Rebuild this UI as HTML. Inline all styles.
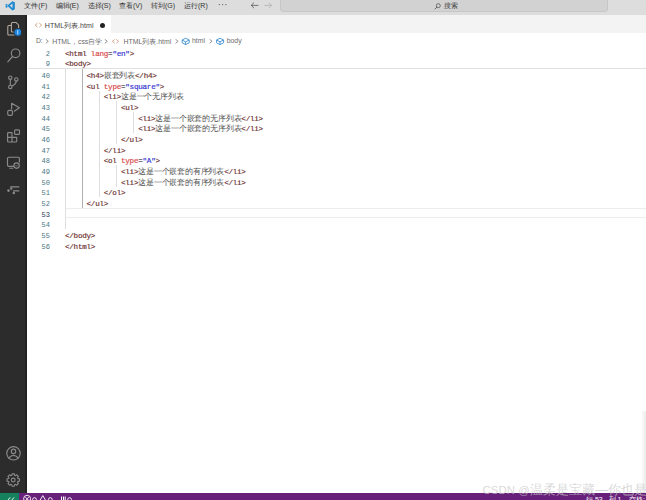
<!DOCTYPE html>
<html><head><meta charset="utf-8">
<style>
*{margin:0;padding:0;box-sizing:border-box}
html,body{width:646px;height:500px;overflow:hidden;background:#fff;font-family:"Liberation Sans",sans-serif}
.abs{position:absolute}
#title{left:0;top:0;width:646px;height:15px;background:#dddddd}
.menu{position:absolute;top:-0.3px;font-size:7px;line-height:11px;color:#333;white-space:nowrap}
#search{left:280px;top:-3px;width:328px;height:14.5px;background:#d2d2d2;border:1px solid #c6c6c6;border-radius:3px}
#act{left:0;top:15px;width:27px;height:478px;background:#2c2c2c}
#tabs{left:27px;top:15px;width:619px;height:18px;background:#f3f3f3}
#tab{left:27px;top:15px;width:83.5px;height:18px;background:#fff}
.tabtxt{font-size:7.1px;color:#444;white-space:nowrap}
#crumbs{left:0;top:33px;font-size:7.2px;color:#6c6c6c;white-space:nowrap}
.code{position:absolute;left:65px;padding-top:1.6px;-webkit-text-stroke:0.18px;font-family:"Liberation Mono",monospace;font-size:7.6px;letter-spacing:-0.252px;line-height:10.66px;height:10.66px;white-space:pre;color:#000}
.ln{position:absolute;padding-top:1.6px;left:20px;width:30px;text-align:right;font-family:"Liberation Mono",monospace;font-size:7.07px;line-height:10.66px;color:#4a7884}
.t{color:#6e3232}.a{color:#d84a4a}.v{color:#3434d0}
.z{font-size:7.81px;letter-spacing:-0.19px;color:#505050;-webkit-text-stroke:0}
.g{position:absolute;width:1.2px;background:#dedede}.g.act{background:#b0b0b0}.ln.cur{color:#2a3a5a}
#status{left:0;top:493px;width:646px;height:7px;background:#68217a}
</style></head><body>
<div id="title" class="abs">
  <svg class="abs" style="left:5px;top:1.4px" width="10.5" height="9.6" viewBox="0 0 24 24"><path d="M17.5 0.5 L23.5 3.3 V20.7 L17.5 23.5 L6.5 13.8 L2 17.2 L0.5 16.3 V7.7 L2 6.8 L6.5 10.2 Z M17.5 6.5 L11 12 L17.5 17.5 Z M3.5 9.5 V14.5 L6 12 Z" fill="#1f8ad2" fill-rule="evenodd"/></svg>
  <div class="menu" style="left:24.3px">文件(F)</div>
  <div class="menu" style="left:55.5px">编辑(E)</div>
  <div class="menu" style="left:87.5px">选择(S)</div>
  <div class="menu" style="left:119px">查看(V)</div>
  <div class="menu" style="left:151px">转到(G)</div>
  <div class="menu" style="left:184px">运行(R)</div>
  <svg class="abs" style="left:218px;top:0" width="10" height="10" viewBox="0 0 10 10" fill="#555"><circle cx="1.3" cy="4.6" r="0.6"/><circle cx="4.6" cy="4.6" r="0.6"/><circle cx="7.9" cy="4.6" r="0.6"/></svg>
  <svg class="abs" style="left:248px;top:0" width="28" height="12" viewBox="0 0 28 12" fill="none" stroke-width="0.9"><path d="M3.2 5.4 H10.4 M6 2.6 L3.2 5.4 L6 8.2" stroke="#555" stroke-width="0.8"/><path d="M16.4 5.4 H23.6 M20.8 2.6 L23.6 5.4 L20.8 8.2" stroke="#b0b0b0" stroke-width="0.8"/></svg>
  <div id="search" class="abs"></div>
  <svg class="abs" style="left:434px;top:2.5px" width="7" height="7" viewBox="0 0 7 7"><circle cx="4.3" cy="2.7" r="2" fill="none" stroke="#555" stroke-width="0.8"/><path d="M2.9 4.1 L0.8 6.2" stroke="#555" stroke-width="0.9"/></svg>
  <div class="menu" style="left:443.5px;color:#444">搜索</div>
</div>
<div id="act" class="abs"><div class="abs" style="left:25px;top:0;width:2px;height:478px;background:#232323"></div>
<svg class="abs" style="left:0;top:0" width="27" height="478" viewBox="0 15 27 478" fill="none" stroke="#8a8a8a" stroke-width="1.15" stroke-linecap="round" stroke-linejoin="round">
 <g stroke="#b5aba0" stroke-width="1.05">
  <path d="M11.4 31 V23.4 Q11.4 22.4 12.4 22.4 H16 L18.6 25 V29"/>
  <path d="M11 25.4 H8.8 Q7.8 25.4 7.8 26.4 V34 Q7.8 35 8.8 35 H14.2"/>
  <path d="M11.4 31 Q11.4 32 12.4 32 H13.5"/>
 </g>
 <circle cx="17.8" cy="32.3" r="3.9" fill="#1a85e0" stroke="#2c2c2c" stroke-width="0.8"/>
 <path d="M17.8 30.6 V34" stroke="#bfe4ff" stroke-width="1"/>
 <circle cx="15.6" cy="53.3" r="4.3"/>
 <path d="M12.5 56.5 L7.8 61.8"/>
 <circle cx="10.3" cy="77.7" r="1.7"/>
 <circle cx="10.3" cy="86.9" r="1.7"/>
 <circle cx="16.3" cy="79.4" r="1.7"/>
 <path d="M10.3 79.4 V85.2"/>
 <path d="M16.3 81.1 Q16.1 84 11.9 86"/>
 <path d="M11.6 109 V103.3 L19.4 107.8 L14.3 111.2"/>
 <rect x="7.7" y="110.4" width="4.8" height="5" rx="1.6"/>
 <path d="M8.4 132.6 H12 V142 H8.4 Q7.6 142 7.6 141.2 V133.4 Q7.6 132.6 8.4 132.6 Z M7.6 137.3 H16.7 V141.2 Q16.7 142 15.9 142 H12"/>
 <rect x="14.6" y="129.8" width="4.9" height="4.6" rx="1"/>
 <path d="M13.5 166.3 H8.7 Q7.5 166.3 7.5 165 V158.3 Q7.5 157.2 8.7 157.2 H18.3 Q19.4 157.2 19.4 158.3 V162"/>
 <circle cx="16.6" cy="165.6" r="2.7"/>
 <path d="M9.8 168.2 H12.8"/>
 <path d="M15.7 165.8 L16.4 166.4 L17.6 164.9" stroke-width="0.7"/>
 <path d="M10.6 186.9 H18.8 M13.6 190.9 H18.8" stroke-width="1.4"/>
 <circle cx="11.3" cy="188.6" r="0.6" fill="#8a8a8a"/>
 <circle cx="8.5" cy="190.6" r="0.7" fill="#8a8a8a"/>
 <circle cx="13.8" cy="192.9" r="0.7" fill="#8a8a8a"/>
 <circle cx="13.5" cy="453.3" r="6.7"/>
 <circle cx="13.5" cy="451.4" r="2.2"/>
 <path d="M8.8 458 Q13.5 452.8 18.2 458"/>
 <g transform="translate(13.2 480)">
  <path d="M-1.45 -4.68 L-1.10 -6.20 L1.10 -6.20 L1.45 -4.68 L2.29 -4.33 L3.61 -5.17 L5.17 -3.61 L4.33 -2.29 L4.68 -1.45 L6.20 -1.10 L6.20 1.10 L4.68 1.45 L4.33 2.29 L5.17 3.61 L3.61 5.17 L2.29 4.33 L1.45 4.68 L1.10 6.20 L-1.10 6.20 L-1.45 4.68 L-2.29 4.33 L-3.61 5.17 L-5.17 3.61 L-4.33 2.29 L-4.68 1.45 L-6.20 1.10 L-6.20 -1.10 L-4.68 -1.45 L-4.33 -2.29 L-5.17 -3.61 L-3.61 -5.17 L-2.29 -4.33 Z"/>
  <circle cx="0" cy="0" r="1.9"/>
 </g>
</svg></div>
<div id="tabs" class="abs"></div>
<div id="tab" class="abs">
  <svg class="abs" style="left:0;top:0" width="20" height="18" viewBox="27 15 20 18" fill="none" stroke="#c8906a" stroke-width="0.8"><path d="M37.5 23.1 L35.2 25.1 L37.5 27.1 M39.3 23.1 L41.6 25.1 L39.3 27.1"/></svg>
  <div class="abs tabtxt" style="left:17.8px;top:5.6px">HTML列表.html</div>
  <div class="abs" style="left:73px;top:7.6px;width:5px;height:5px;border-radius:50%;background:#222"></div>
</div>

<div id="crumbs" class="abs">
  <div class="abs" style="left:35.9px;top:4.3px;font-size:6.9px">D:</div>
  <div class="abs" style="left:52.2px;top:4.3px;font-size:6.9px">HTML，css自学</div>
  <div class="abs" style="left:123.5px;top:4.3px;font-size:6.9px">HTML列表.html</div>
  <div class="abs" style="left:192px;top:4.3px;font-size:6.9px">html</div>
  <div class="abs" style="left:226.7px;top:4.3px;font-size:6.9px">body</div>
  <svg class="abs" style="left:0;top:0" width="260" height="14" viewBox="0 33 260 14" fill="none" stroke="#777" stroke-width="0.8">
   <path d="M45.8 39.3 L48.3 41.3 L45.8 43.3"/>
   <path d="M104.8 39.3 L107.3 41.3 L104.8 43.3"/>
   <path d="M175.6 39.3 L178.1 41.3 L175.6 43.3"/>
   <path d="M209.6 39.3 L212.1 41.3 L209.6 43.3"/>
   <path d="M114.7 39.4 L112.5 41.3 L114.7 43.2 M116.4 39.4 L118.6 41.3 L116.4 43.2" stroke="#c8906a" stroke-width="0.8"/>
   <g stroke="#3e8ed0" stroke-width="0.9">
    <path d="M182.2 40 L185.6 38.2 L189.2 40 V42.8 L185.6 44.6 L182.2 42.8 Z M182.2 40 L185.6 41.8 L189.2 40 M185.6 41.8 V44.6"/>
    <path d="M216.6 40 L220 38.2 L223.6 40 V42.8 L220 44.6 L216.6 42.8 Z M216.6 40 L220 41.8 L223.6 40 M220 41.8 V44.6"/>
   </g>
  </svg>
</div>
<div id="editor" class="abs" style="left:0;top:0">

<div class="g" style="left:64.9px;top:69.4px;height:159.9px"></div>
<div class="g act" style="left:81.9px;top:69.4px;height:138.6px"></div>
<div class="g" style="left:99px;top:90.72px;height:106.6px"></div>
<div class="g" style="left:116px;top:101.38px;height:42.64px"></div>
<div class="g" style="left:116px;top:165.34px;height:21.32px"></div>
<div class="g" style="left:133px;top:112.04px;height:21.32px"></div>
<div class="abs" style="left:66px;top:207.9px;width:580px;height:10.6px;border-top:1px solid #ececec;border-bottom:1px solid #ececec"></div>
<div class="ln" style="top:69.40px">40</div><div class="code" style="top:69.40px">     <span class="t">&lt;h4&gt;</span><span class="z">嵌套列表</span><span class="t">&lt;/h4&gt;</span></div>
<div class="ln" style="top:80.06px">41</div><div class="code" style="top:80.06px">     <span class="t">&lt;ul</span> <span class="a">type</span>=<span class="v">"square"</span><span class="t">&gt;</span></div>
<div class="ln" style="top:90.72px">42</div><div class="code" style="top:90.72px">         <span class="t">&lt;li&gt;</span><span class="z">这是一个无序列表</span></div>
<div class="ln" style="top:101.38px">43</div><div class="code" style="top:101.38px">             <span class="t">&lt;ul&gt;</span></div>
<div class="ln" style="top:112.04px">44</div><div class="code" style="top:112.04px">                 <span class="t">&lt;li&gt;</span><span class="z">这是一个嵌套的无序列表</span><span class="t">&lt;/li&gt;</span></div>
<div class="ln" style="top:122.70px">45</div><div class="code" style="top:122.70px">                 <span class="t">&lt;li&gt;</span><span class="z">这是一个嵌套的无序列表</span><span class="t">&lt;/li&gt;</span></div>
<div class="ln" style="top:133.36px">46</div><div class="code" style="top:133.36px">             <span class="t">&lt;/ul&gt;</span></div>
<div class="ln" style="top:144.02px">47</div><div class="code" style="top:144.02px">         <span class="t">&lt;/li&gt;</span></div>
<div class="ln" style="top:154.68px">48</div><div class="code" style="top:154.68px">         <span class="t">&lt;ol</span> <span class="a">type</span>=<span class="v">"A"</span><span class="t">&gt;</span></div>
<div class="ln" style="top:165.34px">49</div><div class="code" style="top:165.34px">             <span class="t">&lt;li&gt;</span><span class="z">这是一个嵌套的有序列表</span><span class="t">&lt;/li&gt;</span></div>
<div class="ln" style="top:176.00px">50</div><div class="code" style="top:176.00px">             <span class="t">&lt;li&gt;</span><span class="z">这是一个嵌套的有序列表</span><span class="t">&lt;/li&gt;</span></div>
<div class="ln" style="top:186.66px">51</div><div class="code" style="top:186.66px">         <span class="t">&lt;/ol&gt;</span></div>
<div class="ln" style="top:197.32px">52</div><div class="code" style="top:197.32px">     <span class="t">&lt;/ul&gt;</span></div>
<div class="ln cur" style="top:207.98px">53</div><div class="code" style="top:207.98px"></div>
<div class="ln" style="top:218.64px">54</div><div class="code" style="top:218.64px"></div>
<div class="ln" style="top:229.30px">55</div><div class="code" style="top:229.30px"><span class="t">&lt;/body&gt;</span></div>
<div class="ln" style="top:239.96px">56</div><div class="code" style="top:239.96px"><span class="t">&lt;/html&gt;</span></div>
<div class="abs" style="left:27px;top:47px;width:619px;height:21.32px;background:#fff"></div>
<div class="ln" style="top:47px">2</div><div class="code" style="top:47px"><span class="t">&lt;html</span> <span class="a">lang</span>=<span class="v">"en"</span><span class="t">&gt;</span></div>
<div class="ln" style="top:57.66px">9</div><div class="code" style="top:57.66px"><span class="t">&lt;body&gt;</span></div>
<div class="abs" style="left:28px;top:68.4px;width:618px;height:1.1px;background:#e0e0e0"></div>
</div>
<div id="status" class="abs">
 <div class="abs" style="left:0;top:0;width:18.8px;height:7px;background:#16825d"></div>
 <svg class="abs" style="left:0;top:0" width="646" height="7" viewBox="0 493 646 7" fill="none" stroke="#fff" stroke-width="0.9">
  <path d="M8 500 L10.2 497.4 M14 497.4 L11.8 500"/>
  <circle cx="27.1" cy="498.8" r="3.5"/>
  <path d="M25.4 497.1 L28.8 500.5 M28.8 497.1 L25.4 500.5"/>
  <circle cx="34.5" cy="499.6" r="1.9"/>
  <path d="M42.8 495.6 L39.8 500.6 M42.8 495.6 L45.8 500.6"/>
  <circle cx="50.3" cy="499.6" r="1.9"/>
  <path d="M61.5 496.5 V500 M63.5 496.5 V500 M65.2 496.5 V500" stroke-width="1"/>
  <circle cx="69.6" cy="499.6" r="1.9"/>
 </svg>
 <div class="abs" style="left:586px;top:3.2px;font-size:7px;line-height:8px;color:#fff;white-space:nowrap">行 53，</div><div class="abs" style="left:608.5px;top:3.2px;font-size:7px;line-height:8px;color:#fff;white-space:nowrap">列 1</div><div class="abs" style="left:629px;top:3.2px;font-size:7px;line-height:8px;color:#fff;white-space:nowrap">空格: 4</div>
</div>
<div class="abs" style="left:482.5px;top:482.6px;z-index:5;font-size:11.3px;line-height:14px;color:rgba(200,200,200,0.7);white-space:nowrap;letter-spacing:0.1px">CSDN @<span style="font-size:12.6px">温柔是宝藏—你也是</span></div>
<div class="abs" style="left:641.5px;top:411px;width:4.5px;height:82px;background:linear-gradient(90deg,#fafafa,#ececec)"></div>
</body></html>
